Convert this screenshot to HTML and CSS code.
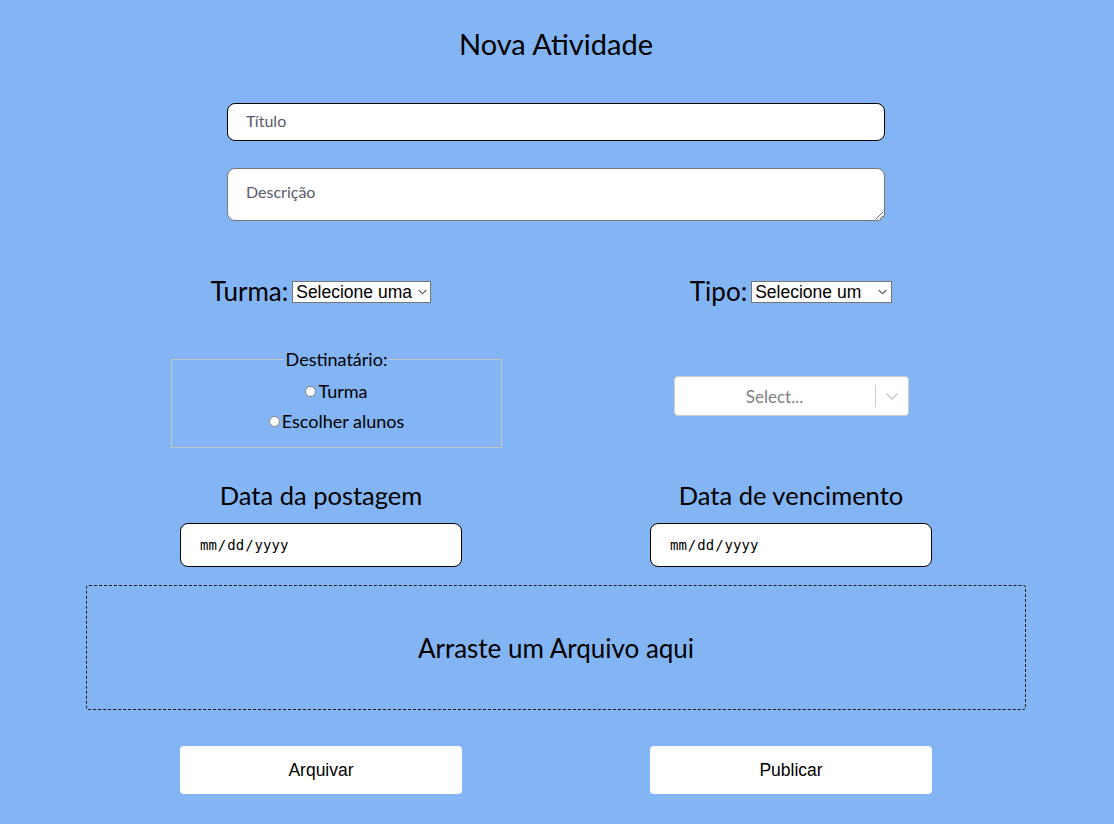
FILE: index.html
```html
<!DOCTYPE html>
<html lang="pt-BR">
<head>
<meta charset="utf-8">
<title>Nova Atividade</title>
<link rel="stylesheet" href="styles.css">
</head>
<body>
<main class="page">
  <h1 class="title">Nova Atividade</h1>
  <div class="text-fields">
    <input class="text-input" type="text" placeholder="Título">
    <textarea class="text-area" placeholder="Descrição"></textarea>
  </div>
  <div class="grid">
    <div class="cell inline-field row-selects">
      <label class="label-big" for="turma">Turma:</label>
      <span class="select-wrap turma">
        <select id="turma" class="native-select"><option>Selecione uma</option></select>
        <svg class="select-chevron" width="9" height="6" viewBox="0 0 9 6"><path d="M0.8 1 L4.5 4.8 L8.2 1" fill="none" stroke="#555" stroke-width="1.1"/></svg>
      </span>
    </div>
    <div class="cell inline-field row-selects">
      <label class="label-big" for="tipo">Tipo:</label>
      <span class="select-wrap tipo">
        <select id="tipo" class="native-select"><option>Selecione um</option></select>
        <svg class="select-chevron" width="9" height="6" viewBox="0 0 9 6"><path d="M0.8 1 L4.5 4.8 L8.2 1" fill="none" stroke="#555" stroke-width="1.1"/></svg>
      </span>
    </div>
    <div class="cell cell-start row-recipients">
      <fieldset class="recipients">
        <legend class="legend">Destinatário:</legend>
        <label class="radio"><input type="radio" name="dest"><span>Turma</span></label>
        <label class="radio"><input type="radio" name="dest"><span>Escolher alunos</span></label>
      </fieldset>
    </div>
    <div class="cell select-cell">
      <div class="fake-select">
        <span class="fake-select-value">Select...</span>
        <span class="fake-select-sep"></span>
        <span class="fake-select-arrow">
          <svg width="20" height="20" viewBox="0 0 20 20"><path d="M4.5 7.5 L10 13 L15.5 7.5" fill="none" stroke="#cccccc" stroke-width="1.6"/></svg>
        </span>
      </div>
    </div>
    <div class="cell date-field">
      <label class="label-date">Data da postagem</label>
      <input class="date-input" type="date">
    </div>
    <div class="cell date-field">
      <label class="label-date">Data de vencimento</label>
      <input class="date-input" type="date">
    </div>
  </div>
  <div class="dropzone">Arraste um Arquivo aqui</div>
  <div class="grid buttons">
    <div class="cell"><button class="btn" type="button">Arquivar</button></div>
    <div class="cell"><button class="btn" type="button">Publicar</button></div>
  </div>
</main>
</body>
</html>
```
FILE: styles.css
```css
html, body {
  margin: 0;
  padding: 0;
}
body {
  background: #83b4f3;
  font-family: "Gill Sans", "Gill Sans MT", Lato, sans-serif;
  color: #000;
  min-height: 824px;
  padding-right: 2px;
}
.page {
  width: 940px;
  margin: 0 auto;
  padding-top: 26px;
}
.title {
  margin: 0;
  text-align: center;
  font-weight: 400;
  font-size: 29px;
  line-height: 36px;
}
.text-fields {
  display: flex;
  flex-direction: column;
  align-items: center;
  gap: 27px;
  margin-top: 41px;
}
.text-input, .text-area {
  box-sizing: border-box;
  width: 658px;
  font-family: inherit;
  font-size: 16px;
  border-radius: 8px;
  background: #fff;
  padding: 0 18px;
  margin: 0;
}
.text-input::placeholder, .text-area::placeholder {
  color: #5a5a6a;
}
.text-input {
  height: 38px;
  border: 1px solid #000;
  padding-bottom: 4px;
}
.text-area {
  height: 53px;
  border: 1px solid #767676;
  padding-top: 13px;
  resize: vertical;
}
.grid {
  display: grid;
  grid-template-columns: 470px 470px;
  justify-items: center;
  align-items: center;
}
.row-selects {
  margin-top: 55px;
}
.row-recipients {
  margin-top: 42px;
}
.select-cell {
  align-self: start;
  margin-top: 70px;
}
.cell-start {
  justify-self: start;
  margin-left: 85px;
}
.inline-field {
  display: flex;
  align-items: center;
  gap: 4px;
}
.label-big {
  font-size: 26px;
  line-height: 30px;
}
.select-wrap {
  position: relative;
  display: inline-flex;
  margin-top: 2px;
}
.native-select {
  appearance: none;
  -webkit-appearance: none;
  font-family: Arial, "Liberation Sans", sans-serif;
  font-size: 17.5px;
  height: 22px;
  line-height: 20px;
  border: 1px solid #767676;
  border-radius: 0;
  background: #fff;
  color: #000;
  padding: 0 0 0 3px;
  margin: 0;
}
.turma .native-select {
  width: 139px;
}
.tipo .native-select {
  width: 141px;
}
.select-chevron {
  position: absolute;
  top: 8px;
  pointer-events: none;
}
.turma .select-chevron {
  right: 4px;
}
.tipo .select-chevron {
  right: 5px;
}
.recipients {
  box-sizing: border-box;
  width: 331px;
  margin: 0;
  padding: 8px 4px 13px;
  border: 1px solid #c4c4c4;
  display: flex;
  flex-direction: column;
  align-items: center;
  gap: 4px;
}
.legend {
  font-size: 18px;
  padding: 0 2px;
  margin: 0 auto;
  line-height: 22px;
}
.radio {
  display: flex;
  align-items: center;
  font-size: 18px;
  line-height: 26px;
}
.radio input {
  margin: 0 2px 0 0;
  width: 11px;
  height: 11px;
}
.fake-select {
  box-sizing: border-box;
  width: 235px;
  height: 40px;
  background: #fff;
  border: 1px solid #cccccc;
  border-radius: 4px;
  display: flex;
  align-items: center;
}
.fake-select-value {
  flex: 1;
  text-align: center;
  color: #808080;
  font-size: 17px;
}
.fake-select-sep {
  width: 1px;
  align-self: stretch;
  margin: 8px 0;
  background: #cccccc;
}
.fake-select-arrow {
  width: 32px;
  display: flex;
  justify-content: center;
  align-items: center;
}
.date-field {
  display: flex;
  flex-direction: column;
  align-items: center;
  margin-top: 32px;
  gap: 13px;
}
.label-date {
  font-size: 25.5px;
  line-height: 30px;
}
.date-input {
  box-sizing: border-box;
  width: 282px;
  height: 44px;
  border: 1px solid #000;
  border-radius: 8px;
  background: #fff;
  padding: 0 18px;
  font-family: "DejaVu Sans Mono", monospace;
  font-size: 14px;
  color: #000;
}
.date-input::-webkit-calendar-picker-indicator {
  display: none;
}
.dropzone {
  box-sizing: border-box;
  height: 125px;
  margin-top: 18px;
  border: 1px dashed #1a1a1a;
  border-radius: 3px;
  display: flex;
  align-items: center;
  justify-content: center;
  font-size: 26px;
}
.buttons {
  margin-top: 36px;
}
.btn {
  width: 282px;
  height: 48px;
  border: none;
  border-radius: 4px;
  background: #fff;
  font-family: Arial, "Liberation Sans", sans-serif;
  font-size: 17.5px;
  color: #000;
}
```
